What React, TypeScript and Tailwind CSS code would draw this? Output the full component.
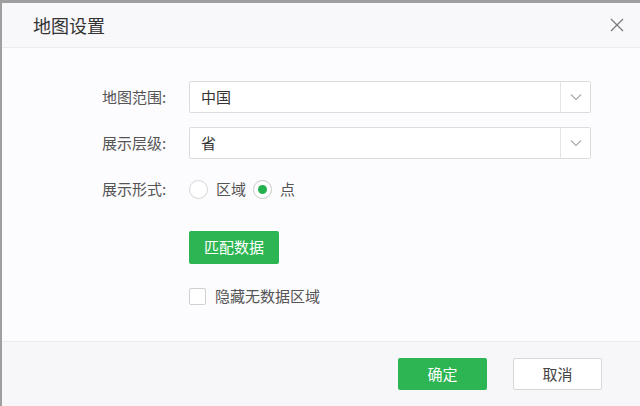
import React from "react";

const font = { fontFamily: '"Noto Sans CJK SC", "Noto Sans", sans-serif' };

function Chevron() {
  return (
    <svg width="12" height="8" viewBox="0 0 12 8" fill="none">
      <path d="M1 1.5 L6 6.5 L11 1.5" stroke="#a8a8a8" strokeWidth="1.1" />
    </svg>
  );
}

function Select({ value }: { value: string }) {
  return (
    <div className="flex h-[32px] w-[402px] items-stretch rounded-[2px] border border-[#dcdcdc] bg-white">
      <div className="flex flex-1 items-center pl-[11px] text-[15px] text-[#333]">{value}</div>
      <div className="flex w-[30px] items-center justify-center border-l border-[#e3e3e3]">
        <Chevron />
      </div>
    </div>
  );
}

export default function App() {
  return (
    <div className="h-[406px] w-[640px] overflow-hidden bg-[#9f9f9f] pl-[2px] pt-[3px]" style={font}>
      <div className="flex h-full w-full flex-col bg-[#fcfbfd]">
        <div className="flex h-[45px] shrink-0 items-center justify-between border-b border-[#ececee] bg-[#f8f7fa] pl-[31px] pr-[16px]">
          <span className="text-[18px] text-[#333]">地图设置</span>
          <svg width="14" height="14" viewBox="0 0 14 14">
            <path d="M1 1 L13 13 M13 1 L1 13" stroke="#777" strokeWidth="1.2" />
          </svg>
        </div>
        <div className="flex h-[293px] shrink-0 flex-col pl-[100px] pt-[33px] text-[15px] text-[#555]">
          <div className="flex items-center">
            <span className="w-[87px]">地图范围:</span>
            <Select value="中国" />
          </div>
          <div className="mt-[14px] flex items-center">
            <span className="w-[87px]">展示层级:</span>
            <Select value="省" />
          </div>
          <div className="mt-[14px] flex h-[32px] items-center">
            <span className="w-[87px]">展示形式:</span>
            <div className="flex items-center">
              <span className="h-[19px] w-[19px] rounded-full border border-[#d6d6d6] bg-white" />
              <span className="ml-[8px] text-[#555]">区域</span>
              <span className="ml-[7px] flex h-[19px] w-[19px] items-center justify-center rounded-full border border-[#c9c9c9] bg-white">
                <span className="h-[9px] w-[9px] rounded-full bg-[#22b14c]" />
              </span>
              <span className="ml-[8px] text-[#555]">点</span>
            </div>
          </div>
          <div className="ml-[87px] mt-[26px] flex h-[33px] w-[90px] items-center justify-center rounded-[2px] bg-[#2db553] text-[15px] text-white">
            匹配数据
          </div>
          <div className="ml-[87px] mt-[21px] flex items-center">
            <span className="h-[17px] w-[17px] rounded-[2px] border border-[#d0d0d0] bg-white" />
            <span className="ml-[9px] text-[#555]">隐藏无数据区域</span>
          </div>
        </div>
        <div className="flex flex-1 items-start justify-end gap-[26px] border-t border-[#ececee] bg-[#f7f6f8] pr-[38px] pt-[16px]">
          <div className="flex h-[32px] w-[89px] items-center justify-center rounded-[2px] bg-[#2db553] text-[15px] text-white">
            确定
          </div>
          <div className="flex h-[32px] w-[89px] items-center justify-center rounded-[2px] border border-[#d8d8d8] bg-white text-[15px] text-[#444]">
            取消
          </div>
        </div>
      </div>
    </div>
  );
}
